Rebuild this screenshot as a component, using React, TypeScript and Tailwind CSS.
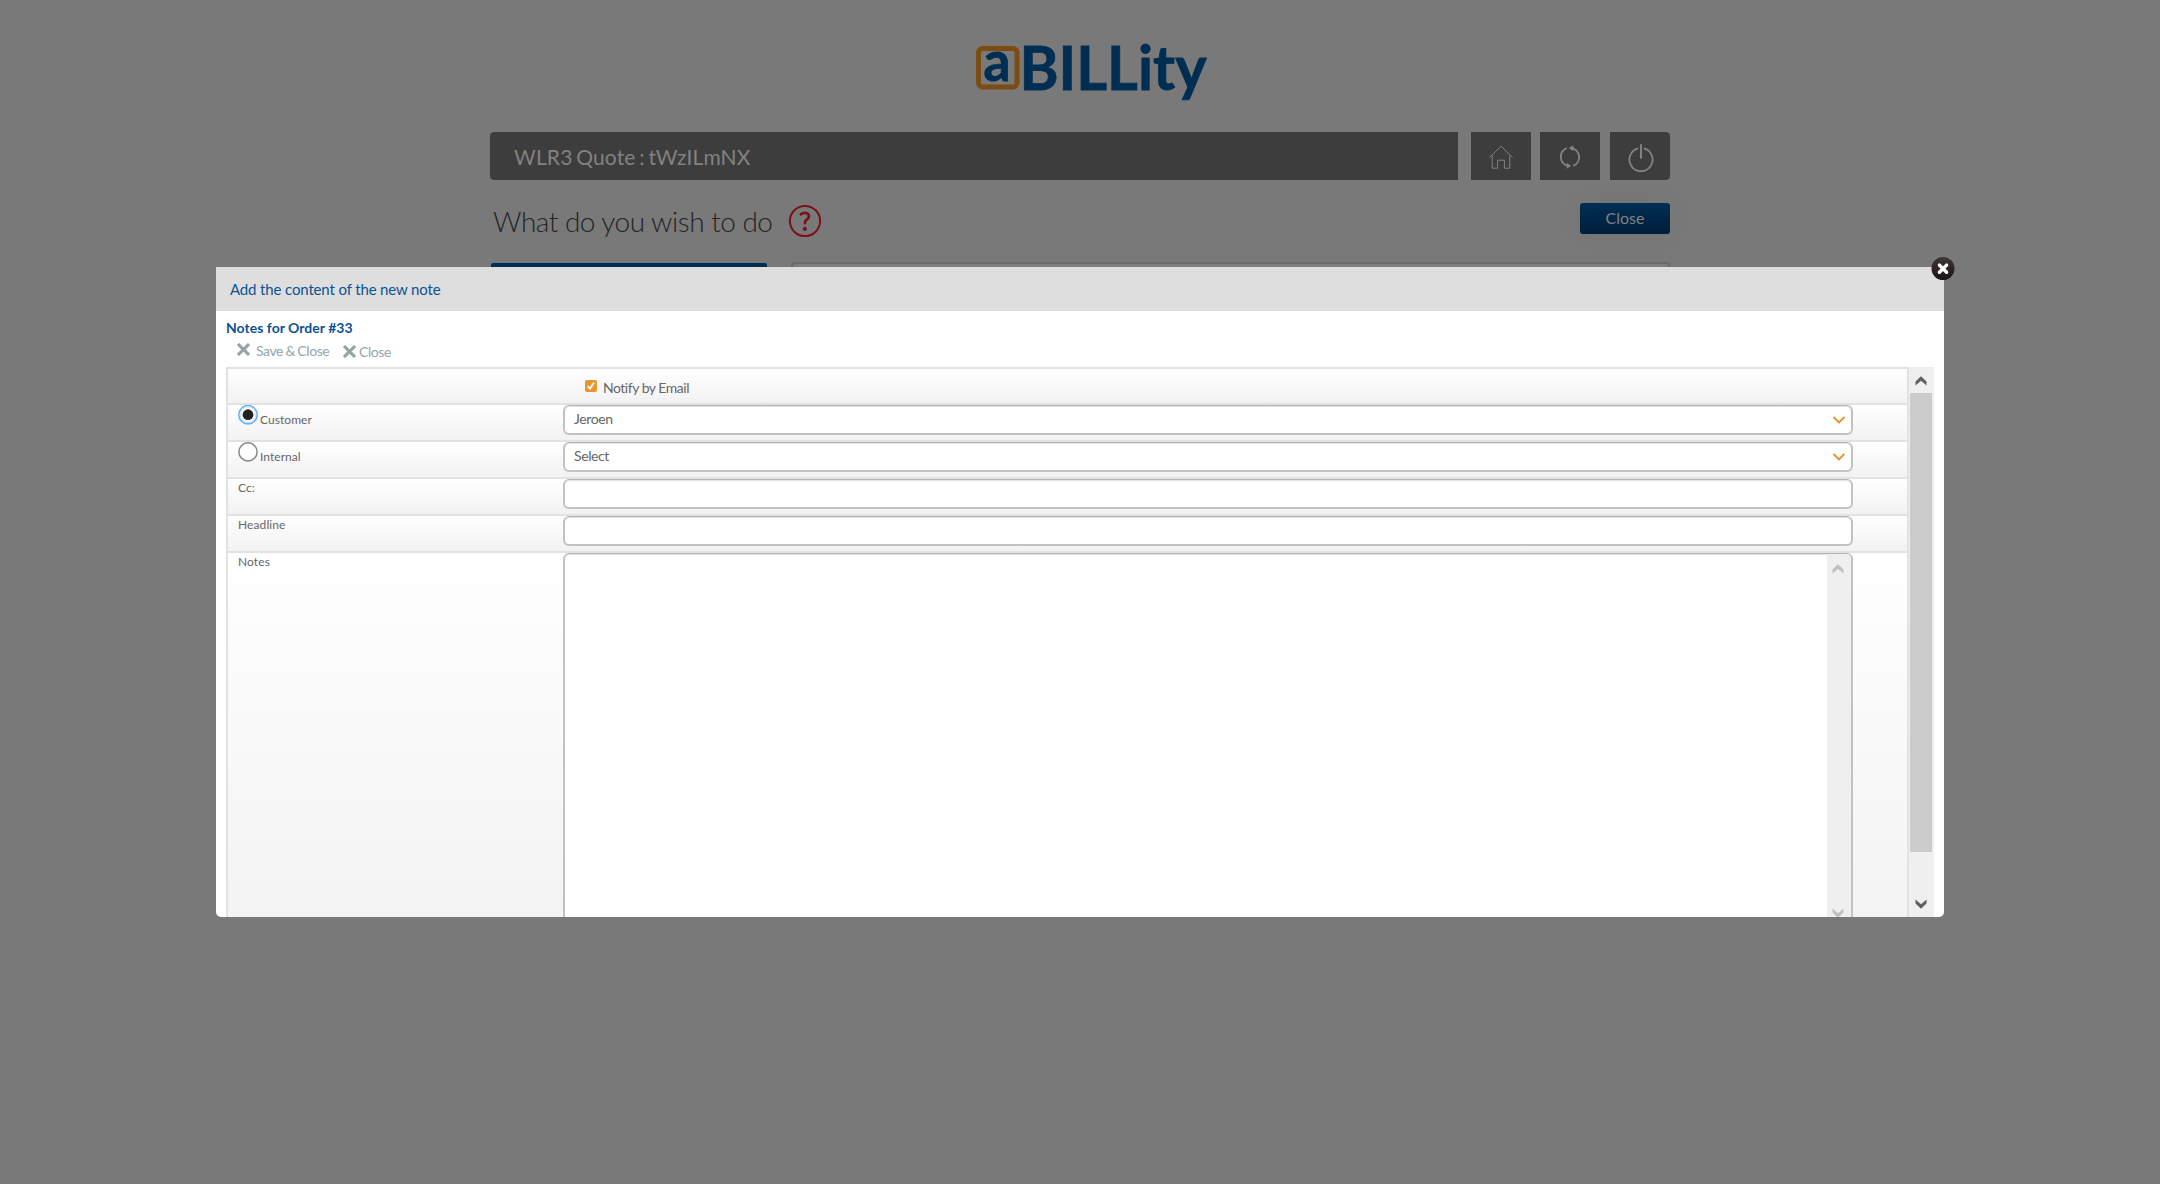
import React from "react";

const CrossMark = ({ className }: { className: string }) => (
  <svg viewBox="0 0 13 13" className={className} fill="none" stroke="#95a5a6" strokeWidth="3.1">
    <path d="M1 1l11 11M12 1L1 12" />
  </svg>
);

const ScrollArrow = ({ down, color }: { down?: boolean; color: string }) => (
  <svg viewBox="0 0 12 10" className="block h-[10px] w-[12px]" fill={color}>
    <path d={down ? "M0.5 0.5L6 5.2L11.5 0.5V4.6L6 9.8L0.5 4.6z" : "M0.5 9.5L6 4.8L11.5 9.5V5.4L6 0.2L0.5 5.4z"} />
  </svg>
);

const box =
  "w-[1290px] shrink-0 rounded-[6px] border-x-2 border-b-2 border-t border-[#c2c2c2] border-t-[#b4b4b4] bg-white shadow-[inset_0_1px_0_#e2e2e2]";

function Row({ label, children, className }: { label?: React.ReactNode; children?: React.ReactNode; className: string }) {
  return (
    <div className={"flex items-start bg-linear-to-b from-white to-[#f2f2f2] " + className}>
      <div className="w-[335px] shrink-0 pl-[10px]">{label}</div>
      {children}
    </div>
  );
}

const Label = ({ children }: { children: string }) => (
  <div className="text-[12px] leading-[18px] tracking-[0.1px] text-[#666]">{children}</div>
);

const RadioLabel = ({ checked, children }: { checked?: boolean; children: string }) => (
  <div className="flex h-[30px] items-start">
    <svg viewBox="0 0 20 20" className="h-5 w-5 shrink-0">
      {checked && <circle cx="10" cy="9.7" r="9.2" fill="white" stroke="#67b1fb" strokeWidth="1.6" />}
      {checked && <circle cx="10" cy="9.7" r="7.9" fill="none" stroke="#cbdced" />}
      {checked && <circle cx="10" cy="9.7" r="5.4" fill="#222" />}
      {!checked && <circle cx="10" cy="9.9" r="9.1" fill="white" stroke="#858585" strokeWidth="1.5" />}
    </svg>
    <span className="ml-[2px] mt-[6px] text-[12px] leading-[18px] tracking-[0.05px] text-[#666]">{children}</span>
  </div>
);

const Select = ({ value }: { value: string }) => (
  <div className={"flex h-[30px] items-center justify-between pl-[9px] pr-[6px] text-[14px] tracking-[-0.4px] text-[#666] " + box}>
    <span className="-mt-[2px]">{value}</span>
    <svg viewBox="0 0 12 8" className="h-2 w-3" fill="none" stroke="#e8902a" strokeWidth="2">
      <path d="M0.5 0.9L6 6.4L11.5 0.9" />
    </svg>
  </div>
);

const tile = "flex h-[48px] w-[60px] items-center justify-center bg-[#3d3d3d] text-[#828282]";

export default function App() {
  return (
    <div className="relative h-[1184px] w-[2160px] overflow-hidden bg-[#797979] font-['Lato',sans-serif]">
      <div className="mx-auto w-[1180px]">
        <header className="flex h-[132px] items-start pl-[486px] pt-[30px]">
          <svg viewBox="0 0 250 100" className="h-[100px] w-[250px]">
            <rect x="2.5" y="18.5" width="38.5" height="38.5" rx="4" fill="none" stroke="#7c4d13" strokeWidth="5" />
            <text x="7.5" y="51" fontFamily="Lato" fontWeight="700" fontSize="55" textLength="27" lengthAdjust="spacingAndGlyphs" fill="#002e52" stroke="#002e52" strokeWidth="0.8">a</text>
            <text x="43.5" y="59.5" fontFamily="Lato" fontWeight="700" fontSize="61.5" textLength="187" lengthAdjust="spacingAndGlyphs" fill="#002e52" stroke="#002e52" strokeWidth="0.8">BILLity</text>
          </svg>
        </header>

        <div className="flex">
          <div className="flex h-[48px] w-[968px] items-center rounded-l-[4px] bg-[#3d3d3d] pl-[24px] text-[21px] text-[#828282]">
            <span className="mt-[2px] tracking-[0.15px] [word-spacing:-1.8px]">WLR3 Quote : tWzILmNX</span>
          </div>
          <div className={"ml-[13px] " + tile}>
            <svg viewBox="0 0 24 24" className="mt-[1px] h-6 w-6" fill="none" stroke="currentColor" strokeWidth="1">
              <path d="M0.5 12.5L12 1.2L23.5 12.5M3.2 10.5V23.2H8.6V15.2H15.4V23.2H20.8V10.5" />
            </svg>
          </div>
          <div className={"ml-[9px] " + tile}>
            <svg viewBox="0 0 22 24" className="mt-px h-6 w-[22px]" fill="none" stroke="currentColor" strokeWidth="1.9">
              <path d="M7.8 3.1A9.3 9.3 0 0 0 8.8 20.8M14.2 20.9A9.3 9.3 0 0 0 12 3" />
              <path d="M10 2.8L14.6 0.2L14 6z M12 21.2L7.4 23.8L8 18z" fill="currentColor" stroke="none" />
              <path d="M11 2.8l3 2M11 21.2l-3-2" />
            </svg>
          </div>
          <div className={"ml-[10px] rounded-r-[4px] " + tile}>
            <svg viewBox="0 0 26 29" className="ml-[1px] mt-[4px] h-[29px] w-[26px]" fill="none" stroke="currentColor" strokeWidth="1.8">
              <path d="M10.2 4.4A11.6 11.6 0 1 0 15.8 4.4" />
              <path d="M13 1V14" strokeWidth="2" strokeLinecap="round" />
            </svg>
          </div>
        </div>

        <div className="flex h-[82px] items-start">
          <h1 className="ml-[3px] mt-[21px] w-[279px] whitespace-nowrap text-[28px] font-light leading-[40px] tracking-[-0.5px] text-[#242424]">What do you wish to do</h1>
          <svg viewBox="0 0 34 34" className="ml-[16px] mt-[24px] h-[34px] w-[34px]">
            <circle cx="17" cy="17" r="15.1" fill="none" stroke="#7d0f18" strokeWidth="2" />
            <path d="M12.8 10.3Q15 8.7 17.2 8.9Q20.9 9.2 20.9 12.3Q20.9 14.3 18.8 15.5Q16.9 16.6 16.9 19.2" fill="none" stroke="#7d0f18" strokeWidth="2.7" strokeLinecap="round" />
            <circle cx="16.9" cy="24.8" r="2.1" fill="#7d0f18" />
          </svg>
          <div className="ml-auto mt-[23px] flex h-[31px] w-[90px] items-center justify-center rounded-[3px] bg-linear-to-b from-[#002f55] to-[#001e37] text-[16px] text-[#828282] shadow-[0_0_30px_rgba(0,0,0,0.05)]">
            <span className="-mt-[2px]">Close</span>
          </div>
        </div>
        <div className="flex justify-between pl-px">
          <div className="mt-[1px] h-[20px] w-[276px] rounded-t-[2px] bg-[#002e52]" />
          <div className="h-[20px] w-[879px] rounded-t-[4px] border-2 border-[#6b6b6b] bg-[#7e7e7e]" />
        </div>
      </div>

      <div className="absolute left-[216px] top-[267px] h-[650px] w-[1728px]">
        <div className="flex h-full flex-col overflow-hidden rounded-b-[5px] bg-white">
          <div className="flex h-[44px] shrink-0 items-center bg-[#dedede] pl-[14px] text-[15px] tracking-[-0.14px] text-[#0b5394]">
            <span className="mt-[1px]">Add the content of the new note</span>
          </div>
          <h2 className="ml-[10px] mt-[7px] text-[14px] font-bold leading-[20px] tracking-[0.02px] text-[#0b5394]">Notes for Order #33</h2>
          <div className="flex h-[29px] shrink-0 items-start pl-[21px] text-[14px] leading-[18px] tracking-[-0.42px] text-[#95a5a6]">
            <CrossMark className="mt-[5px] h-[13px] w-[13px]" />
            <span className="ml-[6px] mt-[4px] w-[74px] whitespace-nowrap [word-spacing:-0.8px]">Save &amp; Close</span>
            <CrossMark className="ml-[13px] mt-[7px] h-[13px] w-[13px]" />
            <span className="ml-[3px] mt-[5px]">Close</span>
          </div>
          <div className="ml-[10px] flex min-h-0 flex-1">
            <div className="w-[1683px] shrink-0 divide-y-2 divide-[#e2e2e2] border-2 border-b-0 border-[#e2e2e2]">
              <Row className="h-[36px]">
                <div className="ml-[22px] mt-[11px] flex items-start">
                  <svg viewBox="0 0 12 12" className="h-3 w-3">
                    <rect width="12" height="12" rx="2" fill="#e8962b" />
                    <path d="M2.8 6.2L5 8.7L9 2.5" fill="none" stroke="white" strokeWidth="1.8" />
                  </svg>
                  <span className="ml-[6px] text-[14px] leading-[16px] tracking-[-0.48px] text-[#666]">Notify by Email</span>
                </div>
              </Row>
              <Row className="h-[37px]" label={<RadioLabel checked>Customer</RadioLabel>}>
                <Select value="Jeroen" />
              </Row>
              <Row className="h-[37px]" label={<RadioLabel>Internal</RadioLabel>}>
                <Select value="Select" />
              </Row>
              <Row className="h-[37px]" label={<Label>Cc:</Label>}>
                <div className={"h-[30px] " + box} />
              </Row>
              <Row className="h-[37px]" label={<Label>Headline</Label>}>
                <div className={"h-[30px] " + box} />
              </Row>
              <Row className="h-[400px]" label={<Label>Notes</Label>}>
                <div className={"flex h-[390px] justify-end overflow-hidden " + box}>
                  <div className="flex w-[24px] flex-col items-center bg-[#efefef] pr-[2px] pt-[10px]">
                    <ScrollArrow color="#c0c0c0" />
                    <div className="h-[334px]" />
                    <ScrollArrow down color="#c0c0c0" />
                  </div>
                </div>
              </Row>
            </div>
            <div className="flex w-[25px] flex-col items-center bg-[#efefef] pr-[2px] pt-[9px]">
              <ScrollArrow color="#606060" />
              <div className="mt-[7px] h-[459px] w-[22px] shrink-0 bg-[#cbcbcb]" />
              <div className="h-[47px]" />
              <ScrollArrow down color="#606060" />
            </div>
          </div>
        </div>
        <svg viewBox="0 0 24 24" className="absolute -right-[11px] -top-[10px] h-6 w-6">
          <defs>
            <linearGradient id="closeFill" x1="0" y1="0" x2="0" y2="1">
              <stop offset="0" stopColor="#3d3735" />
              <stop offset="1" stopColor="#1b1412" />
            </linearGradient>
          </defs>
          <circle cx="12" cy="11.5" r="11.5" fill="url(#closeFill)" />
          <path d="M8.4 8.1l7.2 7.2M15.6 8.1l-7.2 7.2" stroke="white" strokeWidth="3.4" strokeLinecap="round" />
        </svg>
      </div>
    </div>
  );
}
